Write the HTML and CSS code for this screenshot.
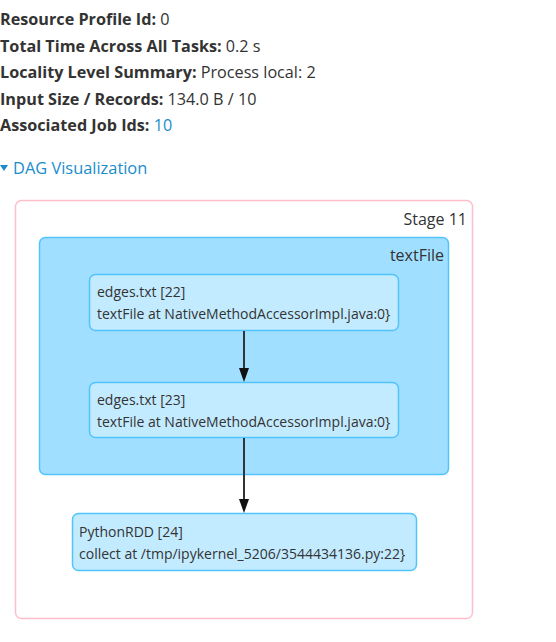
FILE: index.html
```html
<!DOCTYPE html>
<html>
<head>
<meta charset="utf-8">
<link rel="stylesheet" href="styles.css">
</head>
<body>
<div class="page">
  <ul class="summary">
    <li><strong>Resource Profile Id:</strong> 0</li>
    <li><strong>Total Time Across All Tasks:</strong> 0.2 s</li>
    <li><strong>Locality Level Summary:</strong> Process local: 2</li>
    <li><strong>Input Size / Records:</strong> 134.0 B / 10</li>
    <li><strong>Associated Job Ids:</strong> <a class="link" href="#">10</a></li>
  </ul>
  <div class="dag-toggle"><span class="arrow-open"></span><a class="link" href="#">DAG Visualization</a></div>
</div>
<svg class="dag" width="556" height="452" viewBox="0 0 556 452">
  <rect class="stage" x="15.5" y="10.5" width="457" height="418" rx="6" ry="6"/>
  <text class="cluster-label" x="467" y="35" text-anchor="end">Stage 11</text>
  <rect class="cluster" x="39.5" y="47.5" width="409" height="237" rx="6" ry="6"/>
  <text class="cluster-label" x="444" y="71" text-anchor="end">textFile</text>

  <rect class="node" x="89.5" y="84.5" width="309" height="56" rx="6" ry="6"/>
  <text class="node-label" x="97" y="107">edges.txt [22]</text>
  <text class="node-label" x="97" y="129">textFile at NativeMethodAccessorImpl.java:0}</text>

  <rect class="node" x="89.5" y="192.5" width="309" height="55" rx="6" ry="6"/>
  <text class="node-label" x="97" y="215">edges.txt [23]</text>
  <text class="node-label" x="97" y="237">textFile at NativeMethodAccessorImpl.java:0}</text>

  <rect class="node" x="72.5" y="323.5" width="344" height="57" rx="6" ry="6"/>
  <text class="node-label" x="79" y="347">PythonRDD [24]</text>
  <text class="node-label" x="79" y="369">collect at /tmp/ipykernel_5206/3544434136.py:22}</text>

  <line class="edge" x1="244" y1="141" x2="244" y2="180"/>
  <polygon class="head" points="239,178 249,178 244,192"/>
  <line class="edge" x1="244" y1="248" x2="244" y2="311"/>
  <polygon class="head" points="239,309 249,309 244,323"/>
</svg>
</body>
</html>
```
FILE: styles.css
```css
html, body {
  margin: 0;
  padding: 0;
  background: #ffffff;
}
body {
  font-family: "Open Sans", "Noto Sans", sans-serif;
  color: #333333;
  width: 556px;
  overflow: hidden;
}
.page {
  margin-left: 0;
  padding-top: 6px;
}
.summary {
  list-style: none;
  margin: 0;
  padding: 0;
  font-size: 16.2px;
  line-height: 26.5px;
}
.summary strong {
  font-weight: 700;
}
.link {
  color: #1a8ccc;
  text-decoration: none;
}
.dag-toggle {
  margin-top: 17px;
  font-size: 16.4px;
  line-height: 24px;
  display: flex;
  align-items: center;
  gap: 5px;
  padding-left: 0;
}
.arrow-open {
  width: 0;
  height: 0;
  border-left: 4px solid transparent;
  border-right: 4px solid transparent;
  border-top: 6px solid #1a8ccc;
  margin-top: 1px;
}
.dag {
  display: block;
  margin-top: 10px;
  font-family: "Open Sans", "Noto Sans", sans-serif;
}
.dag .stage {
  fill: #ffffff;
  stroke: #ffbfca;
  stroke-width: 1.5;
}
.dag .cluster {
  fill: #a0dfff;
  stroke: #52c4fb;
  stroke-width: 1.5;
}
.dag .node {
  fill: #c3ebff;
  stroke: #52c4fb;
  stroke-width: 1.5;
}
.dag .cluster-label {
  font-size: 16px;
  fill: #333333;
}
.dag .node-label {
  font-size: 14px;
  fill: #333333;
}
.dag .edge {
  stroke: #333333;
  stroke-width: 2;
}
.dag .head {
  fill: #111111;
}
```
